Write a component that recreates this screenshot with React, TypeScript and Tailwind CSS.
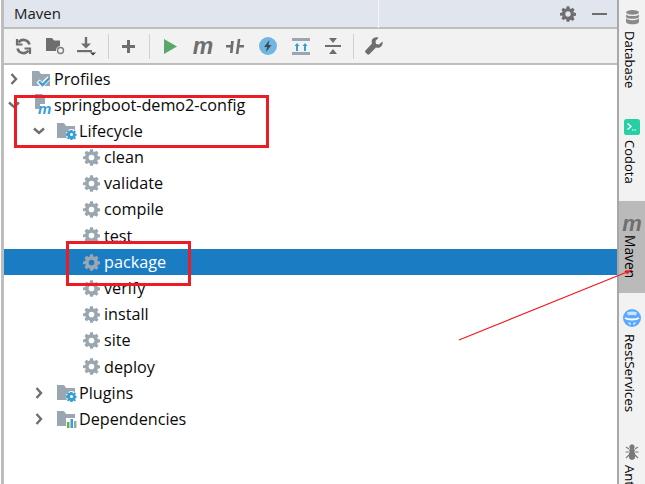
import React, { ReactNode } from 'react';

const Chevron = ({ open }: { open?: boolean }) => (
  <svg width="12" height="12" viewBox="0 0 12 12" fill="none" stroke="#6e6e6e" strokeWidth="2.4">
    {open ? <path d="M1 3.500 6 8l5-4.500" /> : <path d="M3.500 1 8 6l-4.500 5" />}
  </svg>
);

const Gear = ({ color = '#9aa7b0', size = 17 }: { color?: string; size?: number }) => (
  <svg width={size} height={size} viewBox="0 0 24 24" fill={color}>
    <path
      fillRule="evenodd"
      d="M10 1h4l.6 3.100 1.800.8L19 3.100 21.900 6l-1.800 2.600.8 1.800L24 11v4l-3.100.6-.8 1.800 1.800 2.600-2.900 2.900-2.600-1.800-1.800.8L14 24h-4l-.6-3.100-1.800-.8L5 21.900 2.100 19l1.800-2.600-.8-1.800L0 15v-4l3.100-.6.8-1.800L2.100 6 5 3.100l2.600 1.800 1.800-.8zM12 8.500a4 4 0 1 0 0 8 4 4 0 0 0 0-8z"
      transform="translate(0 -.5)"
    />
  </svg>
);

const Folder = ({ children }: { children?: ReactNode }) => (
  <svg width="20" height="18" viewBox="0 0 20 18">
    <path d="M0 1h7l2 3h9v12H0z" fill="#9aa7b0" />
    {children}
  </svg>
);

const BlueGear = () => (
  <g transform="translate(9 7)">
    <circle cx="5.500" cy="5.500" r="5.500" fill="#fff" />
    <path
      fillRule="evenodd"
      fill="#389fd6"
      d="M4.500 1h2l.3 1.300 1-.1.900-.900 1.300 1.300-.9.900.3 1.100 1.100.4v1.900l-1.100.3-.3 1.100.9.900-1.300 1.300-.9-.9-1 .3-.3 1.100h-2l-.3-1.100-1-.3-.9.9-1.300-1.300.9-.9-.4-1.100L0 6.500V4.600l1.200-.4.300-1.100-.9-.900L1.900 1l.9.9 1-.3zM5.500 4a1.500 1.500 0 1 0 0 3 1.500 1.500 0 0 0 0-3z"
    />
  </g>
);

const TreeRow = ({
  indent,
  open,
  arrow,
  icon,
  label,
  selected,
}: {
  indent: number;
  open?: boolean;
  arrow?: boolean;
  icon: ReactNode;
  label: string;
  selected?: boolean;
}) => (
  <div
    className={`flex h-[26.2px] items-center ${selected ? 'bg-[#1a7dc4] text-white' : 'text-[#0a0a0a]'}`}
    style={{ paddingLeft: indent }}
  >
    <span className="flex w-[24px] shrink-0 items-center">{arrow && <Chevron open={open} />}</span>
    <span className="flex w-[22px] shrink-0 items-center">{icon}</span>
    <span>{label}</span>
  </div>
);

const phases = ['clean', 'validate', 'compile', 'test', 'package', 'verify', 'install', 'site', 'deploy'];

const ToolSep = ({ className }: { className: string }) => (
  <div className={`h-[25px] w-px shrink-0 bg-[#d0d0d0] ${className}`} />
);

const MavenM = ({ className }: { className: string }) => (
  <span className={`font-['Liberation_Sans',sans-serif] font-bold italic leading-none ${className}`}>m</span>
);

const Toolbar = () => (
  <div className="flex h-[36px] items-center border-b-2 border-[#bdbdbd] bg-[#f2f2f2] pl-[3px]">
    {/* обновить */}
    <span className="flex w-[32px] shrink-0 justify-center">
      <svg width="17" height="17" viewBox="0 0 17 17" fill="none" stroke="#6e6e6e" strokeWidth="2.600">
        <path d="M14.500 6.500A6.200 6.200 0 0 0 3.500 4.500" />
        <path d="M2.500 10.500a6.200 6.200 0 0 0 11 2" />
        <path d="M2 1v5.500h5.500M15 16v-5.500H9.500" strokeWidth="2.200" />
      </svg>
    </span>
    <span className="flex w-[32px] shrink-0 justify-center">
      <svg width="19" height="18" viewBox="0 0 19 18">
        <path d="M0 1h6l2 2.500h6V9a4.500 4.500 0 0 0-4 5H0z" fill="#6e6e6e" />
        <circle cx="14.500" cy="13.500" r="3" fill="none" stroke="#7d7d7d" strokeWidth="1.400" />
      </svg>
    </span>
    <span className="flex w-[32px] shrink-0 justify-center">
      <svg width="20" height="19" viewBox="0 0 20 19">
        <path d="M7.800 0h2.400v6.500H14L9 11.500 4 6.500h3.800z" fill="#6e6e6e" />
        <rect x="0" y="13" width="15" height="2.200" fill="#6e6e6e" />
        <path d="M13 15.500h6l-3 3z" fill="#3c3c3c" />
      </svg>
    </span>
    <ToolSep className="ml-[5px] mr-[3px]" />
    <span className="flex w-[32px] shrink-0 justify-center">
      <svg width="13" height="13" viewBox="0 0 13 13">
        <path d="M5 0h3v5h5v3H8v5H5V8H0V5h5z" fill="#6e6e6e" />
      </svg>
    </span>
    <ToolSep className="ml-[5px] mr-[4px]" />
    <span className="flex w-[32.6px] shrink-0 justify-center">
      <svg width="14" height="15" viewBox="0 0 14 15">
        <path d="M1 0l13 7.500-13 7.500z" fill="#59a869" />
      </svg>
    </span>
    <span className="flex w-[32.6px] shrink-0 justify-center">
      <MavenM className="text-[23px] text-[#6e6e6e]" />
    </span>
    <span className="flex w-[32.6px] shrink-0 justify-center">
      <svg width="18" height="17" viewBox="0 0 18 17">
        <path d="M0 7h5.500v2.500H0zM12.500 7H18v2.500h-5.500z" fill="#6e6e6e" />
        <path d="M5 3h2.800L6.600 15H4zM11.800 1h2.600l-2 15H9.800z" fill="#6e6e6e" />
      </svg>
    </span>
    <span className="flex w-[32.6px] shrink-0 justify-center">
      <svg width="18" height="18" viewBox="0 0 18 18">
        <circle cx="9" cy="9" r="9" fill="#6fb6e2" />
        <path d="M10.500 3 5 10h3l-1 5 5.500-7h-3z" fill="#3f4a52" />
      </svg>
    </span>
    <span className="flex w-[32.6px] shrink-0 justify-center">
      <svg width="18" height="17" viewBox="0 0 18 17">
        <rect x="0" y="0" width="18" height="3" fill="#9aa7b0" />
        <rect x="0" y="14" width="18" height="3" fill="#9aa7b0" />
        <path d="M5 5 2.500 8H4v5h2V8h1.500zM13 5l-2.500 3H12v5h2V8h1.500z" fill="#389fd6" />
      </svg>
    </span>
    <span className="flex w-[32.6px] shrink-0 justify-center">
      <svg width="16" height="16" viewBox="0 0 16 16">
        <rect x="0" y="7" width="16" height="2" fill="#6e6e6e" />
        <path d="M4 0h8L8 5zM4 16h8L8 11z" fill="#6e6e6e" />
      </svg>
    </span>
    <ToolSep className="ml-[3.400px] mr-[4px]" />
    <span className="flex w-[32px] shrink-0 justify-center">
      <svg width="18" height="18" viewBox="0 0 18 18">
        <path
          d="M17.500 4.500 14 7.500 11 7l-.5-3L13.500.7C11-.3 8 .5 7 3c-.5 1.200-.4 2.400 0 3.500L.5 13.500c-.6.600-.6 1.500 0 2l1.800 1.800c.5.500 1.400.5 2 0l6.700-6.800c1.200.4 2.500.4 3.700-.1 2.400-1 3.300-3.500 2.800-5.900z"
          fill="#6e6e6e"
        />
      </svg>
    </span>
  </div>
);

const SideLabel = ({ children, size = 'text-[13px]' }: { children: string; size?: string }) => (
  <span className={`mr-[5px] [writing-mode:vertical-rl] font-['Open_Sans','Noto_Sans',sans-serif] leading-[16px] text-black ${size}`}>
    {children}
  </span>
);

const Sidebar = () => (
  <aside className="flex h-full w-[28px] shrink-0 flex-col items-center overflow-hidden border-l-2 border-[#a8a8a8] bg-[#f2f2f2]">
    <div className="mt-[10px] flex h-[78px] shrink-0 flex-col items-center gap-[6px]">
      <svg width="15" height="16" viewBox="0 0 15 16" fill="#8a8a8a">
        <ellipse cx="7.500" cy="2.500" rx="7" ry="2.500" />
        <path d="M.5 4.500c1 1.500 3.500 2 7 2s6-.5 7-2v3c-1 1.500-3.500 2-7 2s-6-.5-7-2zM.5 9c1 1.500 3.500 2 7 2s6-.5 7-2v4c-1 2-3.500 2.500-7 2.500s-6-.5-7-2.500z" />
      </svg>
      <SideLabel>Database</SideLabel>
    </div>
    <div className="mt-[31px] flex h-[67px] shrink-0 flex-col items-center gap-[5px]">
      <svg width="16" height="16" viewBox="0 0 16 16">
        <rect width="16" height="16" rx="2.500" fill="#27cfa4" />
        <path d="M3.500 4.500 7 7.500l-3.500 3" fill="none" stroke="#fff" strokeWidth="1.400" />
        <path d="M8 11h4" stroke="#fff" strokeWidth="1.200" strokeDasharray="1.500 1" />
      </svg>
      <SideLabel>Codota</SideLabel>
    </div>
    <div className="mt-[15px] flex h-[92px] w-full shrink-0 flex-col items-center bg-[#bababa] pt-[12px]">
      <MavenM className="h-[18px] text-[22px] text-[#707070]" />
      <span className="mt-[4px] flex"><SideLabel size="text-[13.800px]">Maven</SideLabel></span>
    </div>
    <div className="mt-[16px] flex shrink-0 flex-col items-center gap-[7px]">
      <svg width="20" height="18" viewBox="0 0 20 18">
        <circle cx="10" cy="9" r="9" fill="#5aa9ff" />
        <path d="M3 9c3 2 11 2 14 0" fill="none" stroke="#fff" strokeWidth="1.800" />
        <path d="M5 3.500c3-1.500 7-1.500 10 0l-1 3c-2.500-.6-5.500-.6-8 0zM6 13.500h2.500l.5 2.500-2-.5zM14 13.500h-2.500l-.5 2.500 2-.5z" fill="#cfe5ff" />
      </svg>
      <SideLabel size="text-[13.500px]">RestServices</SideLabel>
    </div>
    <div className="mt-[32px] flex flex-col items-center gap-[5px]">
      <svg width="14" height="16" viewBox="0 0 14 16" fill="#7a7a7a" stroke="#7a7a7a">
        <circle cx="7" cy="3" r="2.200" />
        <ellipse cx="7" cy="6.500" rx="2.500" ry="1.800" />
        <ellipse cx="7" cy="11.500" rx="3" ry="4" />
        <path d="M4 5 1 3M10 5l3-2M4 8H.5M10 8h3.500M4 11 1 14M10 11l3 3" fill="none" strokeWidth="1.100" />
      </svg>
      <SideLabel>Ant</SideLabel>
    </div>
  </aside>
);

export default function App() {
  return (
    <div className="relative flex h-[484px] w-[645px] overflow-hidden bg-white font-['Open_Sans','Noto_Sans',sans-serif] text-[16.200px]">
      <div className="w-[4px] shrink-0 border-l border-white bg-[#bdbdbd]" />
      {/* Панель Maven */}
      <div className="flex min-w-0 flex-1 flex-col">
        <header className="flex h-[29px] items-center border-b-2 border-[#bdbdbd] bg-[#e1e5ee] pl-[10px] pr-[10px]">
          <span className="text-[15px] text-[#1a1a1a]">Maven</span>
          <span className="ml-auto flex"><Gear color="#6e6e6e" size={16} /></span>
          <span className="ml-[16px] h-[2px] w-[15px] bg-[#6e6e6e]" />
        </header>
        <Toolbar />
        <div className="flex-1 bg-white pt-[0.6px]">
          <TreeRow
            indent={4}
            arrow
            label="Profiles"
            icon={
              <svg width="20" height="18" viewBox="0 0 20 18">
                <path d="M0 1h7l2 3h9v12H0z" fill="#9aa7b0" />
                <path d="M6 11l4 4 7-7" fill="none" stroke="#fff" strokeWidth="4.500" />
                <path d="M7 11.500l3.500 3.500 7-7" fill="none" stroke="#389fd6" strokeWidth="2.400" />
              </svg>
            }
          />
          <TreeRow
            indent={4}
            arrow
            open
            label="springboot-demo2-config"
            icon={
              <svg width="20" height="24" viewBox="0 0 20 24">
                <path d="M3 1h7l3 3v7H8v5H3z" fill="#9aa7b0" />
                <text x="6" y="21" fontSize="15" fontWeight="700" fontStyle="italic" fill="#389fd6" fontFamily="Liberation Sans">m</text>
              </svg>
            }
          />
          <TreeRow
            indent={29}
            arrow
            open
            label="Lifecycle"
            icon={<Folder><BlueGear /></Folder>}
          />
          {phases.map((p) => (
            <TreeRow
              key={p}
              indent={54}
              icon={<span className="ml-[1px] flex"><Gear /></span>}
              label={p}
              selected={p === 'package'}
            />
          ))}
          <TreeRow indent={29} arrow label="Plugins" icon={<Folder><BlueGear /></Folder>} />
          <TreeRow
            indent={29}
            arrow
            label="Dependencies"
            icon={
              <Folder>
                <rect x="9" y="8" width="11" height="10" fill="#fff" />
                <rect x="10" y="12" width="2.500" height="6" fill="#62b543" />
                <rect x="13.500" y="9" width="2.500" height="9" fill="#389fd6" />
                <rect x="17" y="11" width="2.500" height="7" fill="#9aa7b0" />
              </Folder>
            }
          />
        </div>
      </div>
      <Sidebar />

      {/* Красные пометки поверх скриншота */}
      <div className="absolute left-[378px] top-0 h-[28px] w-px bg-[#f4f5f8]" />
      <div className="absolute left-[14px] top-[95px] h-[53px] w-[255px] border-[3px] border-[#ed1c24]" />
      <div className="absolute left-[66px] top-[241px] h-[45px] w-[125px] border-[3px] border-[#ed1c24]" />
      <svg className="absolute left-0 top-0" width="645" height="484" fill="none">
        <path d="M459 340 632 270" stroke="#ed1c24" strokeWidth="1.300" />
        <path d="M632 270l-7 .5 2 4z" fill="#ed1c24" />
      </svg>
    </div>
  );
}
